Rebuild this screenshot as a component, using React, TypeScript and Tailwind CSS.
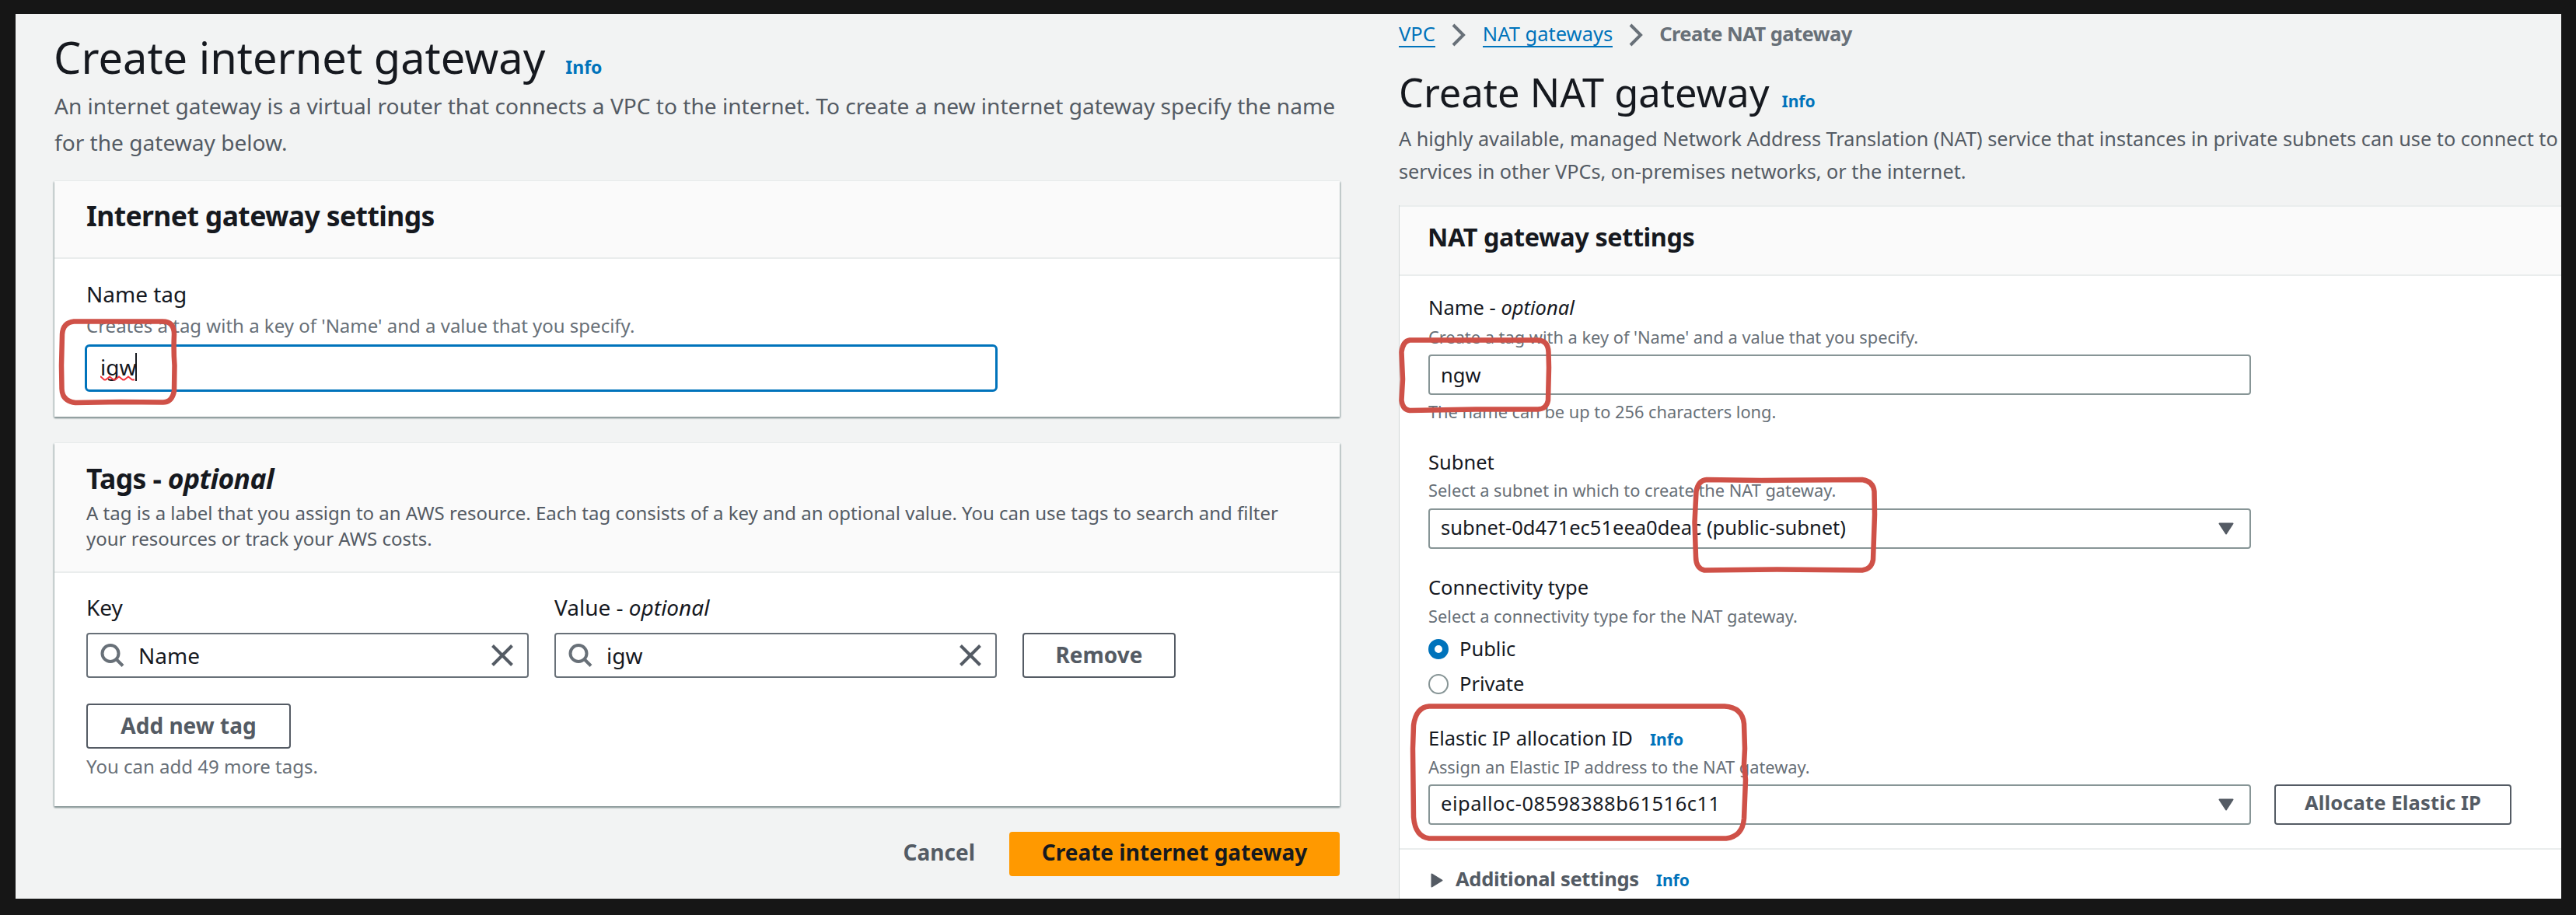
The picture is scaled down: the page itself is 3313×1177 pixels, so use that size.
import type { ReactNode } from "react";

function SearchIcon() {
  return (
    <svg className="h-[30px] w-[31px] shrink-0" viewBox="0 0 31 30" fill="none" stroke="#687078" strokeWidth="4">
      <circle cx="13" cy="12.5" r="10.5" />
      <path d="M20.5 20 L29 28.5" />
    </svg>
  );
}

function CloseIcon() {
  return (
    <svg className="h-7 w-7 shrink-0" viewBox="0 0 28 28" fill="none" stroke="#545b64" strokeWidth="4">
      <path d="M1.5 1.5 L26.5 26.5 M26.5 1.5 L1.5 26.5" />
    </svg>
  );
}

function Chevron() {
  return (
    <svg className="h-[30px] w-[18px] shrink-0" viewBox="0 0 18 30" fill="none" stroke="#687078" strokeWidth="4">
      <path d="M2 2 L15 15 L2 28" />
    </svg>
  );
}

function CaretDown() {
  return (
    <svg className="h-4 w-5 shrink-0" viewBox="0 0 20 16" fill="#545b64" stroke="#545b64" strokeWidth="2" strokeLinejoin="round">
      <path d="M1.5 1.5 H18.5 L10 14.5 Z" />
    </svg>
  );
}

function TagField({ value }: { value: string }) {
  return (
    <div className="flex h-[58px] w-[569px] items-center rounded-[4px] border-2 border-[#687078] bg-white pr-[18px] pl-4">
      <SearchIcon />
      <span className="ml-[18px] flex-1">{value}</span>
      <CloseIcon />
    </div>
  );
}

function Select({ children }: { children: ReactNode }) {
  return (
    <div className="flex h-[52px] w-[1058px] items-center justify-between rounded-[4px] border-2 border-[#879596] bg-white pr-5 pl-[14px]">
      {children}
      <CaretDown />
    </div>
  );
}

function Hint({ children }: { children: ReactNode }) {
  return <p className="text-[21.8px] leading-7 text-[#687078]">{children}</p>;
}

function Mark({ box, d, view }: { box: string; d: string; view: string }) {
  return (
    <svg className={box} viewBox={view} fill="none" stroke="#cf5148" strokeWidth="6.5" strokeLinejoin="round">
      <path d={d} />
    </svg>
  );
}

function InternetGateway() {
  return (
    <section className="flex w-[1779px] shrink-0 flex-col pr-[76px] pl-[50px] text-[28px]">
      <div className="mt-5 flex h-[70px] shrink-0 items-baseline leading-[70px]">
        <h1 className="-ml-px text-[56px] whitespace-nowrap">Create internet gateway</h1>
        <span className="ml-[26px] text-[23px] font-bold text-[#0073bb]">Info</span>
      </div>
      <p className="mt-[5px] text-[28.1px] leading-[46.5px] whitespace-nowrap text-[#545b64]">
        An internet gateway is a virtual router that connects a VPC to the internet. To create a new internet gateway specify the name
        <br />
        for the gateway below.
      </p>

      <div className="mt-[27px] flex h-[303px] flex-col bg-white shadow-[0_2px_2px_#879596,1px_1px_2px_#aab7b8,-1px_1px_2px_#aab7b8]">
        <div className="h-[100px] shrink-0 border-b-2 border-[#eaeded] bg-[#fafafa] pt-[21px] pl-[41px]">
          <h2 className="text-[35.5px] leading-[46px] font-bold tracking-[-0.6px]">Internet gateway settings</h2>
        </div>
        <div className="flex flex-col pt-[23px] pl-[41px]">
          <label className="leading-[44px]">Name tag</label>
          <p className="mt-[3px] text-[24px] leading-8 text-[#687078]">Creates a tag with a key of 'Name' and a value that you specify.</p>
          <div className="mt-2 -ml-[2px] flex h-[61px] w-[1174px] items-center rounded-[6px] border-[3.5px] border-[#0073bb] pl-[17px]">
            <div className="relative mb-[3px] flex items-center">
              <span>igw</span>
              <svg className="absolute top-[32px] left-0 h-2 w-[46px]" viewBox="0 0 46 8" fill="none" stroke="#f3323c" strokeWidth="1.8">
                <path d="M0 1 L5 5.5 L7 5.5 L12 1.5 L17 5.5 L19 5.5 L24 1.5 L29 5.5 L31 5.5 L36 1.5 L41 5.5 L44 5.5" />
              </svg>
              <span className="-ml-px h-9 w-[1.5px] bg-[#16191f]" />
            </div>
          </div>
        </div>
      </div>

      <div className="mt-[34px] flex h-[467px] flex-col bg-white shadow-[0_2px_2px_#879596,1px_1px_2px_#aab7b8,-1px_1px_2px_#aab7b8]">
        <div className="h-[167px] shrink-0 border-b-2 border-[#eaeded] bg-[#fafafa] pt-[22px] pl-[41px]">
          <h2 className="text-[35.5px] leading-[46px] font-bold tracking-[-0.6px]">
            Tags - <i>optional</i>
          </h2>
          <p className="mt-[5px] text-[24px] leading-[33px] whitespace-nowrap text-[#545b64]">
            A tag is a label that you assign to an AWS resource. Each tag consists of a key and an optional value. You can use tags to search and filter
            <br />
            your resources or track your AWS costs.
          </p>
        </div>
        <div className="flex flex-col items-start pt-[22px] pl-[41px]">
          <div className="flex items-end gap-[33px]">
            <div>
              <p className="mb-[11px] leading-[44px]">Key</p>
              <TagField value="Name" />
            </div>
            <div>
              <p className="mb-[11px] leading-[44px]">
                Value - <i>optional</i>
              </p>
              <TagField value="igw" />
            </div>
            <button className="h-[58px] w-[197px] rounded-[4px] border-2 border-[#545b64] pb-[3px] font-bold text-[#545b64]">Remove</button>
          </div>
          <button className="mt-[33px] h-[58px] w-[263px] rounded-[4px] border-2 border-[#545b64] pb-[3px] font-bold text-[#545b64]">Add new tag</button>
          <p className="mt-[7px] text-[24px] leading-8 text-[#687078]">You can add 49 more tags.</p>
        </div>
      </div>

      <div className="mt-[33px] flex items-center justify-end gap-[44px] font-bold">
        <button className="pb-[5px] text-[#545b64]">Cancel</button>
        <button className="h-[57px] w-[425px] rounded-[4px] bg-[#ff9900] pb-[5px] text-[#16191f]">Create internet gateway</button>
      </div>
    </section>
  );
}

function NatGateway() {
  return (
    <section className="flex w-[1495px] shrink-0 flex-col text-[25.5px]">
      <nav className="mt-[9px] flex h-[34px] items-start leading-8 text-[#0073bb]">
        <span className="border-b-2 border-[#0073bb]">VPC</span>
        <span className="mt-[3px] mr-[22px] ml-[21px]">
          <Chevron />
        </span>
        <span className="border-b-2 border-[#0073bb]">NAT gateways</span>
        <span className="mt-[3px] mr-[21px] ml-[21px]">
          <Chevron />
        </span>
        <span className="font-bold tracking-[-0.55px] text-[#687078]">Create NAT gateway</span>
      </nav>
      <div className="mt-[26px] flex h-16 shrink-0 items-baseline leading-[64px]">
        <h1 className="text-[50.6px] whitespace-nowrap">Create NAT gateway</h1>
        <span className="ml-4 text-[21px] font-bold text-[#0073bb]">Info</span>
      </div>
      <p className="mt-[6px] text-[25.25px] leading-[42px] whitespace-nowrap text-[#545b64]">
        A highly available, managed Network Address Translation (NAT) service that instances in private subnets can use to connect to
        <br />
        services in other VPCs, on-premises networks, or the internet.
      </p>

      <div className="mt-[23px] flex grow flex-col border-l border-[#d0d6d6] bg-white">
        <div className="h-[91px] shrink-0 border-y-2 border-[#eaeded] bg-[#fafafa] pt-[17px] pl-[36px]">
          <h2 className="text-[32.4px] leading-[42px] font-bold tracking-[-0.4px]">NAT gateway settings</h2>
        </div>
        <div className="flex flex-col pt-5 pl-[37px]">
          <p className="leading-10">
            Name - <i>optional</i>
          </p>
          <div className="mt-[5px]">
            <Hint>Create a tag with a key of 'Name' and a value that you specify.</Hint>
          </div>
          <div className="mt-2 mb-2 flex h-[52px] w-[1058px] items-center rounded-[4px] border-2 border-[#879596] pl-[14px]">ngw</div>
          <Hint>The name can be up to 256 characters long.</Hint>

          <p className="mt-[30px] mb-[3px] leading-10">Subnet</p>
          <Hint>Select a subnet in which to create the NAT gateway.</Hint>
          <div className="mt-[9px]">
            <Select>
              <span className="mb-1">subnet-0d471ec51eea0deac (public-subnet)</span>
            </Select>
          </div>

          <p className="mt-[29px] mb-1 leading-10">Connectivity type</p>
          <Hint>Select a connectivity type for the NAT gateway.</Hint>
          <div className="mt-[7px] flex h-10 items-center gap-[14px]">
            <span className="mt-[2px] size-[26px] rounded-full border-8 border-[#0073bb]" />
            <span>Public</span>
          </div>
          <div className="mt-[5px] flex h-10 items-center gap-[14px]">
            <span className="mt-[2px] size-[26px] rounded-full border-2 border-[#879596]" />
            <span>Private</span>
          </div>

          <div className="mt-[30px] mb-1 flex h-10 items-baseline leading-10">
            <span>Elastic IP allocation ID</span>
            <span className="ml-[22px] text-[21px] font-bold text-[#0073bb]">Info</span>
          </div>
          <Hint>Assign an Elastic IP address to the NAT gateway.</Hint>
          <div className="mt-2 flex gap-[30px]">
            <Select>
              <span className="mb-1 tracking-[0.5px]">eipalloc-08598388b61516c11</span>
            </Select>
            <button className="h-[52px] w-[305px] rounded-[4px] border-2 border-[#545b64] pb-[6px] font-bold tracking-[0.15px] text-[#545b64]">
              Allocate Elastic IP
            </button>
          </div>
        </div>
        <div className="mt-[30px] flex items-baseline border-t-2 border-[#eaeded] pt-[17px] pl-10 leading-10 font-bold text-[#545b64]">
          <svg className="h-[19px] w-4 translate-y-[2px]" viewBox="0 0 16 19" fill="#545b64" stroke="#545b64" strokeWidth="2" strokeLinejoin="round">
            <path d="M1.5 1.5 V17.5 L14.5 9.5 Z" />
          </svg>
          <span className="ml-4 tracking-[-0.3px]">Additional settings</span>
          <span className="ml-[22px] text-[21px] text-[#0073bb]">Info</span>
        </div>
      </div>
    </section>
  );
}

export default function App() {
  return (
    <div className="relative h-[1177px] w-[3313px] overflow-hidden bg-[#161616] pt-[18px] pl-5 font-['Noto_Sans',sans-serif] text-[#16191f]">
      <div className="flex h-[1138px] w-[3274px] overflow-hidden bg-[#f2f3f3]">
        <InternetGateway />
        <NatGateway />
      </div>
      <Mark
        box="absolute top-[410px] left-[75px] h-[112px] w-[154px]"
        view="0 0 154 112"
        d="M20 3.5 H134 Q149 3.5 149 20 Q148 40 149.5 60 L149 93 Q146 108 134 107.5 L80 107 L22 108 Q5 106 4.5 90 L4 60 L5 20 Q6 5 20 3.5 Z"
      />
      <Mark
        box="absolute top-[433px] left-[1798px] h-[99px] w-[199px]"
        view="0 0 199 99"
        d="M15 4.5 H180 Q193 5 193.5 20 L194 40 L193 82 Q191 93 180 93.5 L100 93.5 L15 95 Q6 94 4.5 82 L6 55 L4.5 20 Q6 6 15 4.5 Z"
      />
      <Mark
        box="absolute top-[612px] left-[2175px] h-[127px] w-[241px]"
        view="0 0 241 127"
        d="M20 5 L90 6 L220 5 Q234 7 235.5 20 L236 50 L234 108 Q232 120 220 121.5 L110 120.5 L17 121.5 Q6 119 6 104 L4.5 60 L6.5 20 Q9 6 20 5 Z"
      />
      <Mark
        box="absolute top-[903px] left-[1812px] h-[181px] w-[438px]"
        view="0 0 438 181"
        d="M26 5.5 H406 Q429 7 431 28 L432 60 L431 80 L433 100 L431 150 Q429 173 408 175.5 H26 Q8 173 6 148 L5 60 L6 30 Q9 7 26 5.5 Z"
      />
    </div>
  );
}
